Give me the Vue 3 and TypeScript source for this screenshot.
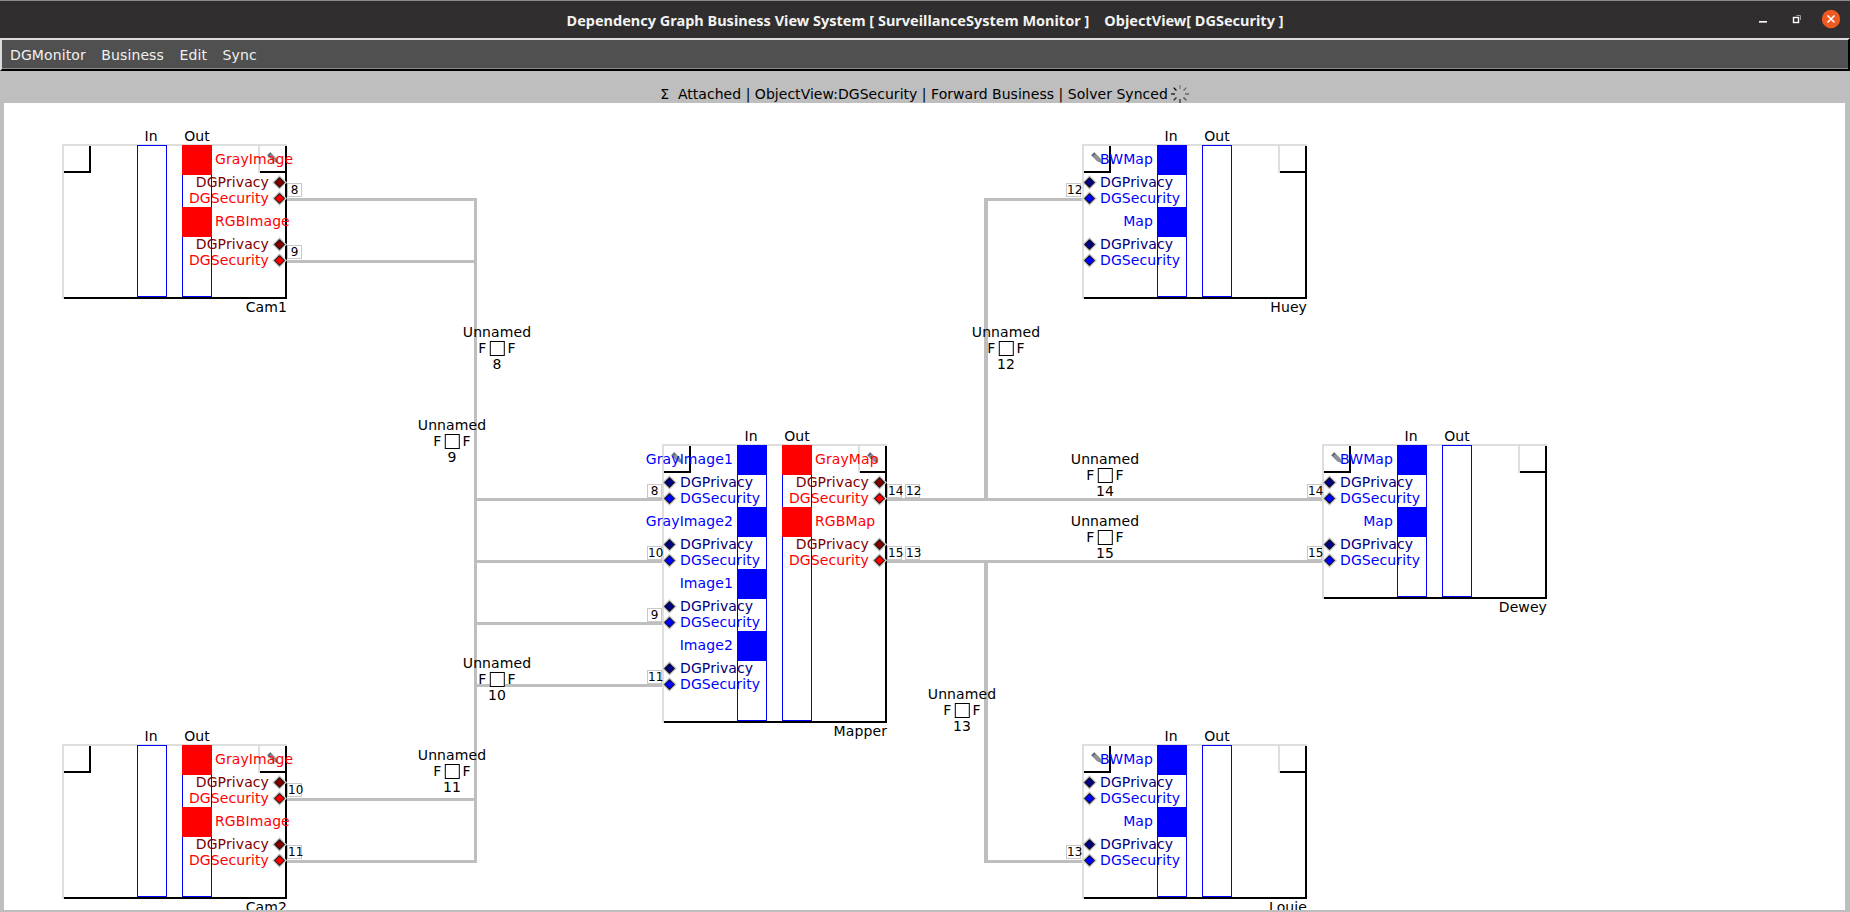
<script setup lang="ts">
type Dir = 'in' | 'out'
interface GNode {
  name: string
  x: number
  y: number
  w: number
  h: number
  inputs: string[]
  outputs: string[]
  pencilLeft: boolean
  pencilRight: boolean
}
interface Tag { t: string; x: number; y: number }
interface Bus { n: number; cx: number; y: number }

const ORIGIN_X = 4
const ORIGIN_Y = 103

const titleText = 'Dependency Graph Business View System [ SurveillanceSystem Monitor ]    ObjectView[ DGSecurity ]'
const statusText = 'Σ  Attached | ObjectView:DGSecurity | Forward Business | Solver Synced'
const menus = ['DGMonitor', 'Business', 'Edit', 'Sync']

const nodes: GNode[] = [
  { name: 'Cam1', x: 62, y: 144, w: 225, h: 155, inputs: [], outputs: ['GrayImage', 'RGBImage'], pencilLeft: false, pencilRight: true },
  { name: 'Huey', x: 1082, y: 144, w: 225, h: 155, inputs: ['BWMap', 'Map'], outputs: [], pencilLeft: true, pencilRight: false },
  { name: 'Mapper', x: 662, y: 444, w: 225, h: 279, inputs: ['GrayImage1', 'GrayImage2', 'Image1', 'Image2'], outputs: ['GrayMap', 'RGBMap'], pencilLeft: true, pencilRight: true },
  { name: 'Dewey', x: 1322, y: 444, w: 225, h: 155, inputs: ['BWMap', 'Map'], outputs: [], pencilLeft: true, pencilRight: false },
  { name: 'Cam2', x: 62, y: 744, w: 225, h: 155, inputs: [], outputs: ['GrayImage', 'RGBImage'], pencilLeft: false, pencilRight: true },
  { name: 'Louie', x: 1082, y: 744, w: 225, h: 155, inputs: ['BWMap', 'Map'], outputs: [], pencilLeft: true, pencilRight: false }
]

const ports = [
  { label: 'DGPrivacy', kind: 'privacy' },
  { label: 'DGSecurity', kind: 'security' }
]

const tags: Tag[] = [
  { t: '8', x: 287, y: 183 }, { t: '9', x: 287, y: 245 },
  { t: '10', x: 287, y: 783 }, { t: '11', x: 287, y: 845 },
  { t: '8', x: 647, y: 484 }, { t: '10', x: 647, y: 546 },
  { t: '9', x: 647, y: 608 }, { t: '11', x: 647, y: 670 },
  { t: '14', x: 887, y: 484 }, { t: '12', x: 905, y: 484 },
  { t: '15', x: 887, y: 546 }, { t: '13', x: 905, y: 546 },
  { t: '12', x: 1066, y: 183 }, { t: '13', x: 1066, y: 845 },
  { t: '14', x: 1307, y: 484 }, { t: '15', x: 1307, y: 546 }
]

const buses: Bus[] = [
  { n: 8, cx: 497, y: 324 }, { n: 9, cx: 452, y: 417 },
  { n: 10, cx: 497, y: 655 }, { n: 11, cx: 452, y: 747 },
  { n: 12, cx: 1006, y: 324 }, { n: 13, cx: 962, y: 686 },
  { n: 14, cx: 1105, y: 451 }, { n: 15, cx: 1105, y: 513 }
]

const wirePath = [
  'M287 199.5H477', 'M287 261.5H477', 'M287 799.5H477', 'M287 861.5H477',
  'M475.5 198V863',
  'M475.5 499.5H662', 'M475.5 561.5H662', 'M475.5 623.5H662', 'M475.5 685.5H662',
  'M887 499.5H1322', 'M887 561.5H1322',
  'M984 199.5H1082', 'M984 861.5H1082'
].join(' ')
const wirePathThick = 'M986 198V501 M986 560V863'

const ticks = Array.from({ length: 8 }, (_, i) => i * 45)

function at(x: number, y: number): Record<string, string> {
  return { left: `${x - ORIGIN_X}px`, top: `${y - ORIGIN_Y}px` }
}
function nodeStyle(n: GNode): Record<string, string> {
  return { ...at(n.x, n.y), width: `${n.w}px`, height: `${n.h}px` }
}
function sides(n: GNode): { dir: Dir; groups: string[] }[] {
  return [
    { dir: 'in', groups: n.inputs },
    { dir: 'out', groups: n.outputs }
  ]
}
function fill(dir: Dir, kind: string): string {
  if (dir === 'in') return kind === 'privacy' ? '#000080' : '#0000ff'
  return kind === 'privacy' ? '#800000' : '#ff0000'
}
</script>

<template>
  <div class="window">
    <header class="titlebar">
      <span class="title">{{ titleText }}</span>
      <div class="winbtns">
        <svg width="100" height="24" viewBox="0 0 100 24">
          <rect x="9" y="12" width="8" height="1.6" fill="#fff" />
          <path d="M46.5 6.5H50.5V11" fill="none" stroke="#9a9a9a" />
          <rect x="43.5" y="8.5" width="5" height="5" fill="none" stroke="#fff" stroke-width="1.4" />
          <circle cx="81" cy="10" r="9.2" fill="#ee5a22" />
          <path d="M77.5 6.5L84.5 13.5M84.5 6.5L77.5 13.5" stroke="#fff" stroke-width="1.6" />
        </svg>
      </div>
    </header>

    <nav class="menubar">
      <span v-for="m in menus" :key="m" class="menu">{{ m }}</span>
    </nav>

    <main class="workspace">
      <div class="status">
        <span class="status-text">{{ statusText }}</span>
        <svg class="spinner" width="20" height="20" viewBox="0 0 20 20">
          <line
            v-for="(a, i) in ticks"
            :key="a"
            x1="10"
            y1="1"
            x2="10"
            y2="5"
            stroke="#000"
            stroke-width="1.3"
            :stroke-opacity="0.35 + i * 0.09"
            :transform="`rotate(${a} 10 10)`"
          />
        </svg>
      </div>

      <section class="canvas">
        <svg class="wires" width="1841" height="810">
          <g :transform="`translate(${-ORIGIN_X} ${-ORIGIN_Y})`" fill="none" stroke="#bebebe" shape-rendering="crispEdges">
            <path :d="wirePath" stroke-width="3" />
            <path :d="wirePathThick" stroke-width="4" />
          </g>
        </svg>

        <div v-for="b in buses" :key="b.n" class="bus" :style="at(b.cx, b.y)">
          <span>Unnamed</span>
          <span class="bus-row">F<i class="bus-box"></i>F</span>
          <span>{{ b.n }}</span>
        </div>

        <article v-for="n in nodes" :key="n.name" class="node" :style="nodeStyle(n)">
          <div class="corner left">
            <svg v-if="n.pencilLeft" class="pencil" width="11" height="11" viewBox="0 0 11 11">
              <path d="M0.6 3.2L3.2 0.6L9 6.4L10.5 10.5L6.4 9Z" fill="#8e929c" stroke="#5c5c5c" stroke-width="0.6" />
              <path d="M0.6 3.2L3.2 0.6L4.6 2L2 4.6Z" fill="#5f6a80" />
            </svg>
          </div>
          <div class="corner right">
            <svg v-if="n.pencilRight" class="pencil" width="11" height="11" viewBox="0 0 11 11">
              <path d="M0.6 3.2L3.2 0.6L9 6.4L10.5 10.5L6.4 9Z" fill="#8e929c" stroke="#5c5c5c" stroke-width="0.6" />
              <path d="M0.6 3.2L3.2 0.6L4.6 2L2 4.6Z" fill="#5f6a80" />
            </svg>
          </div>

          <div v-for="s in sides(n)" :key="s.dir" class="bar" :class="s.dir">
            <span class="bar-title">{{ s.dir === 'in' ? 'In' : 'Out' }}</span>
            <i v-for="g in s.groups" :key="g" class="swatch" :class="s.dir"></i>
          </div>

          <div class="columns">
            <div v-for="s in sides(n)" :key="s.dir" class="col" :class="s.dir">
              <div v-for="g in s.groups" :key="g" class="group">
                <div class="group-head">{{ g }}</div>
                <div v-for="p in ports" :key="p.kind" class="port">
                  <svg class="diamond" width="15" height="15" viewBox="0 0 15 15">
                    <polygon points="7.5,0 15,7.5 7.5,15 0,7.5" fill="#d6d6d6" />
                    <polygon points="7.5,1.5 13.5,7.5 7.5,13.5 1.5,7.5" fill="#7c7c7c" />
                    <polygon points="7.5,2.8 12.2,7.5 7.5,12.2 2.8,7.5" :fill="fill(s.dir, p.kind)" stroke="#000" stroke-width="0.9" />
                  </svg>
                  <span class="port-label" :style="{ color: fill(s.dir, p.kind) }">{{ p.label }}</span>
                </div>
              </div>
            </div>
          </div>

          <span class="node-name">{{ n.name }}</span>
        </article>

        <span v-for="(t, i) in tags" :key="i" class="tag" :style="at(t.x, t.y)">{{ t.t }}</span>
      </section>
    </main>
  </div>
</template>

<style>
html, body {
  margin: 0;
  overflow: hidden;
}
</style>

<style scoped>
.window {
  display: flex;
  flex-direction: column;
  width: 100vw;
  height: 100vh;
  background: #bebebe;
  font-family: "DejaVu Sans", sans-serif;
  font-size: 14px;
  line-height: 16px;
  letter-spacing: 0.1px;
  color: #000;
  overflow: hidden;
}
.titlebar {
  position: relative;
  flex: 0 0 38px;
  box-sizing: border-box;
  display: flex;
  align-items: center;
  justify-content: center;
  background: #302e2e;
  border-top: 1px solid #8c8c8c;
}
.title {
  font-family: "Noto Sans", sans-serif;
  font-weight: 700;
  font-size: 14.5px;
  letter-spacing: 0;
  color: #f2f2f2;
  white-space: pre;
}
.winbtns {
  position: absolute;
  right: 0;
  top: 8px;
  height: 24px;
}
.winbtns svg {
  display: block;
}
.menubar {
  flex: 0 0 33px;
  box-sizing: border-box;
  display: flex;
  align-items: center;
  padding-left: 2px;
  background: #505050;
  border-top: 2px solid #dcdcdc;
  border-left: 2px solid #dcdcdc;
  border-bottom: 2px solid #000;
  border-right: 2px solid #000;
  box-shadow: inset 0 -1px #8a8a8a;
}
.menu {
  padding: 0 8px 0 6px;
  margin-right: 1.6px;
  color: #f0f0f0;
}
.workspace {
  flex: 1;
  min-height: 0;
  display: flex;
  flex-direction: column;
}
.status {
  flex: 0 0 32px;
  box-sizing: border-box;
  display: flex;
  align-items: flex-end;
  justify-content: center;
  padding-bottom: 1px;
}
.status-text {
  white-space: pre;
  letter-spacing: 0.03px;
}
.spinner {
  margin-left: 2px;
  margin-bottom: -2px;
  display: block;
}
.canvas {
  position: relative;
  flex: 1;
  margin: 0 5px 2px 4px;
  background: #fff;
  overflow: hidden;
}
.wires {
  position: absolute;
  left: 0;
  top: 0;
}
.bus {
  position: absolute;
  display: flex;
  flex-direction: column;
  align-items: center;
  transform: translateX(-50%);
  white-space: nowrap;
}
.bus-row {
  display: flex;
  align-items: center;
  gap: 3px;
  height: 16px;
}
.bus-box {
  display: block;
  width: 13px;
  height: 13px;
  border: 1px solid #000;
  background: #fff;
}
.node {
  position: absolute;
  background: #fff;
  box-shadow: inset 2px 2px 0 #dedede, inset -2px -2px 0 #000;
}
.corner {
  position: absolute;
  top: 0;
  width: 29px;
  height: 29px;
  box-sizing: border-box;
  display: flex;
  align-items: center;
  justify-content: center;
  box-shadow: inset 2px 2px 0 #dedede, inset -2px -2px 0 #000;
}
.corner.left {
  left: 0;
}
.corner.right {
  right: 0;
}
.pencil {
  display: block;
  margin-top: -2px;
}
.bar {
  position: absolute;
  top: 1px;
  bottom: 2px;
  width: 30px;
  box-sizing: border-box;
  display: flex;
  flex-direction: column;
  gap: 32px;
  border: 1px solid #0000ff;
}
.bar.in {
  left: 75px;
}
.bar.out {
  left: 120px;
}
.bar-title {
  position: absolute;
  top: -18px;
  left: 50%;
  transform: translateX(-50%);
}
.bar.in .bar-title {
  transform: translateX(calc(-50% - 1px));
}
.swatch {
  display: block;
  flex: 0 0 30px;
  margin: -1px -1px 0;
}
.swatch + .swatch {
  margin-top: 0;
}
.swatch.in {
  background: #0000ff;
}
.swatch.out {
  background: #ff0000;
}
.columns {
  position: relative;
  display: grid;
  grid-template-columns: 75px 75px minmax(0, 1fr);
  height: 100%;
  white-space: nowrap;
}
.col {
  min-width: 0;
}
.col.in {
  grid-column: 1;
}
.col.out {
  grid-column: 3;
}
.group {
  height: 62px;
}
.group-head {
  height: 30px;
  line-height: 30px;
}
.col.in .group-head {
  display: flex;
  justify-content: flex-end;
  color: #0000ff;
  padding-right: 4px;
}
.col.out .group-head {
  color: #ff0000;
  padding-left: 3px;
}
.port {
  display: flex;
  align-items: center;
  height: 16px;
}
.col.out .port {
  flex-direction: row-reverse;
}
.diamond {
  flex: none;
  display: block;
}
.port-label {
  flex: none;
}
.col.in .port-label {
  margin-left: 3px;
}
.col.out .port-label {
  margin-right: 3px;
}
.node-name {
  position: absolute;
  top: 100%;
  right: 0;
}
.tag {
  position: absolute;
  box-sizing: border-box;
  width: 15px;
  height: 14px;
  border: 1px solid #c8c8c8;
  background: #fff;
  font-size: 12px;
  line-height: 12px;
  text-align: center;
  letter-spacing: 0;
}
</style>
